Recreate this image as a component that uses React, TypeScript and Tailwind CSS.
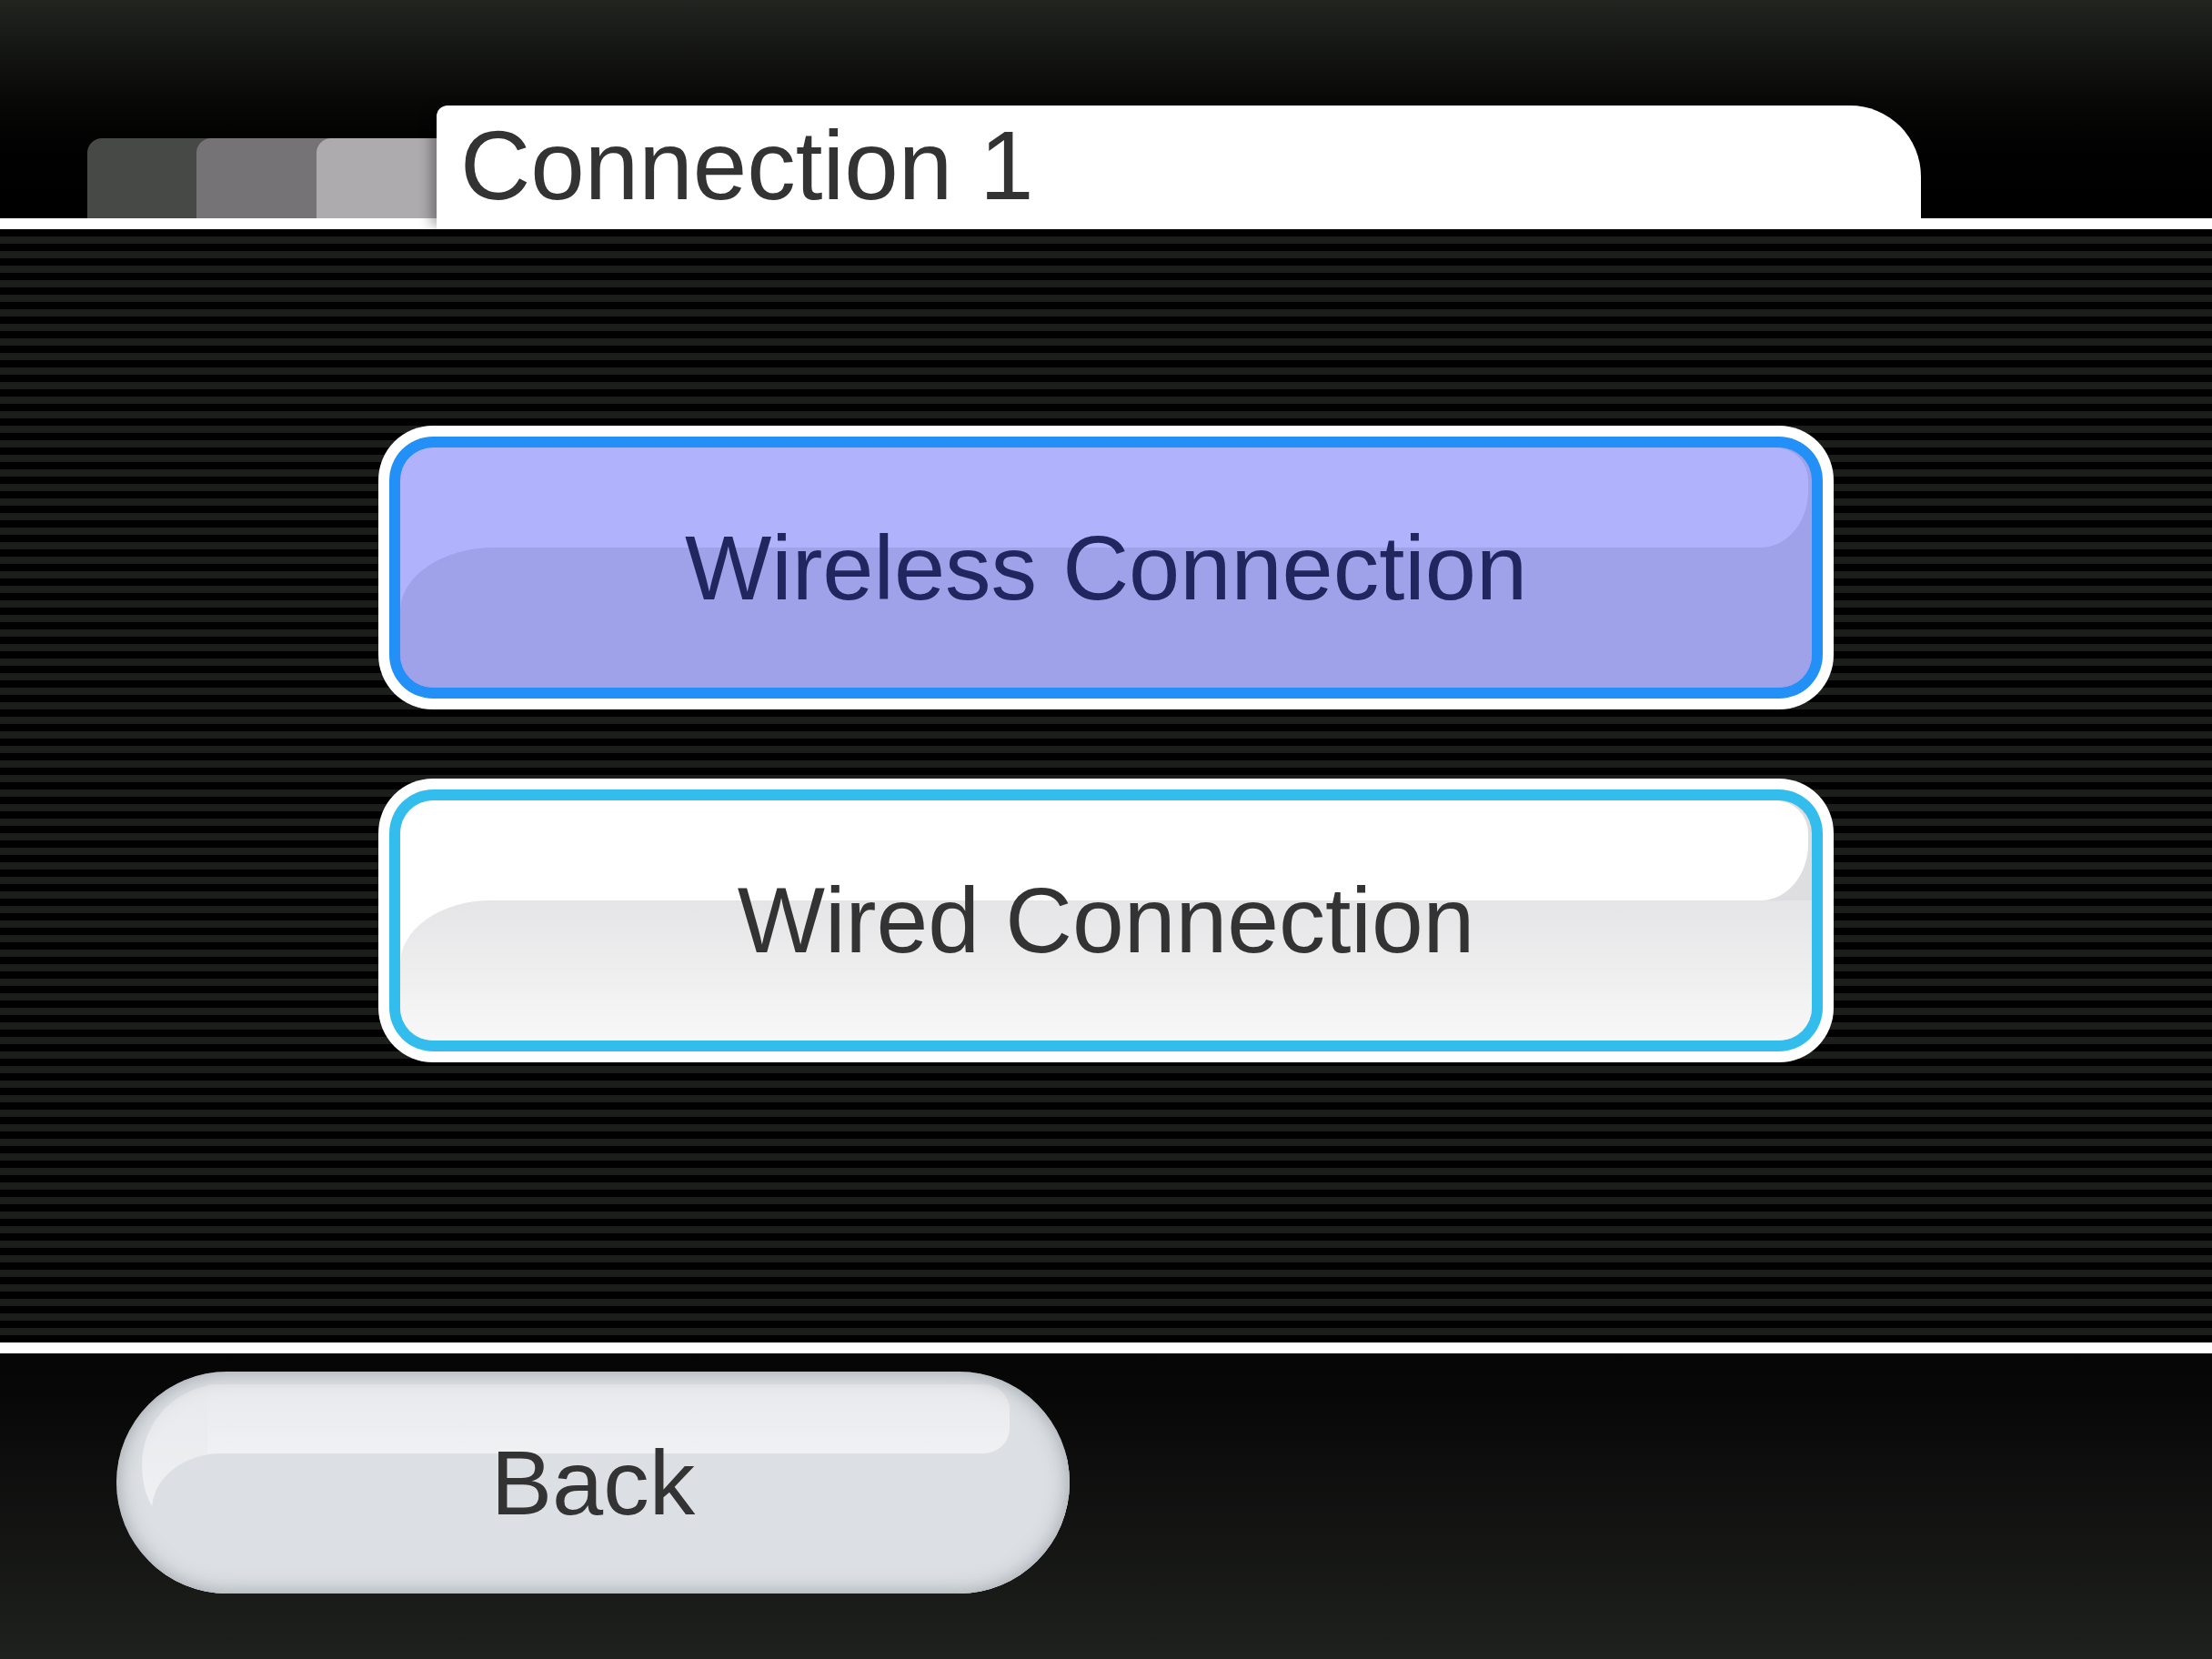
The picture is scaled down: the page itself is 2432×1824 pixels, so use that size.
export default function App() {
  return (
    <div className="flex h-[1824px] w-[2432px] flex-col overflow-hidden bg-black font-['Liberation_Sans',Arial,sans-serif]">
      {/* header with tabs */}
      <div className="relative z-10 flex h-[240px] shrink-0 items-end bg-gradient-to-b from-[#222420] to-[#000000] pl-[96px]">
        <div className="h-[88px] w-[140px] rounded-tl-[16px] bg-[#474946]" />
        <div className="ml-[-20px] h-[88px] w-[152px] rounded-tl-[16px] bg-[#757376]" />
        <div className="ml-[-20px] h-[88px] w-[152px] rounded-tl-[16px] bg-[#adabae]" />
        <div className="mb-[-12px] ml-[-20px] h-[136px] w-[1632px] rounded-tl-[12px] rounded-tr-[78px] bg-white pl-[26px] pt-[13px] shadow-[-10px_0_14px_-4px_rgba(0,0,0,0.35)]">
          <span className="text-[107px] leading-none text-[#333333]">Connection 1</span>
        </div>
      </div>
      <div className="h-[12px] shrink-0 bg-white" />

      {/* striped body */}
      <div className="flex flex-1 flex-col items-center gap-[76px] bg-[repeating-linear-gradient(to_bottom,#000000_0px,#000000_8px,#1b1e1b_8px,#1b1e1b_16px)] pt-[216px]">
        <div className="rounded-[60px] bg-white p-[12px]">
          <div className="rounded-[48px] bg-[#2290f6] p-[12px]">
            <div className="relative h-[264px] w-[1552px] overflow-hidden rounded-[36px] bg-[#9fa1e9]">
              <div className="absolute left-0 right-[4px] top-0 h-[110px] rounded-t-[36px] rounded-br-[52px_62px] bg-[#b0b2fc]" />
              <div className="absolute left-0 top-[100px] h-[90px] w-[110px] bg-[#b0b2fc]" />
              <div className="absolute inset-x-0 bottom-0 top-[110px] rounded-tl-[104px_70px] bg-[#9fa1e9]" />
              <div className="relative flex h-full items-center justify-center text-[101px] leading-none text-[#21265f]">
                Wireless Connection
              </div>
            </div>
          </div>
        </div>

        <div className="rounded-[60px] bg-white p-[12px]">
          <div className="rounded-[48px] bg-[#33bded] p-[12px]">
            <div className="relative h-[264px] w-[1552px] overflow-hidden rounded-[36px] bg-[#dedde0]">
              <div className="absolute left-0 right-[4px] top-0 h-[110px] rounded-t-[36px] rounded-br-[52px_62px] bg-white" />
              <div className="absolute left-0 top-[100px] h-[90px] w-[110px] bg-white" />
              <div className="absolute inset-x-0 bottom-0 top-[110px] rounded-tl-[100px_70px] bg-gradient-to-b from-[#e5e4e6] to-[#f8f8f8]" />
              <div className="relative flex h-full items-center justify-center text-[102px] leading-none text-[#333333]">
                Wired Connection
              </div>
            </div>
          </div>
        </div>
      </div>

      <div className="h-[12px] shrink-0 bg-white" />

      {/* footer */}
      <div className="flex h-[336px] shrink-0 flex-col bg-gradient-to-b from-[#050505] to-[#1f211e] pl-[128px] pt-[20px]">
        <div className="relative h-[244px] w-[1048px] overflow-hidden rounded-full bg-[#dce0e4]">
          <div className="absolute left-[28px] top-[14px] h-[146px] w-[880px] rounded-tl-[92px] rounded-bl-[30px_60px] bg-gradient-to-b from-[#e8e9ec] to-[#f0f1f3]" />
          <div className="absolute left-[100px] right-[66px] top-[14px] h-[76px] rounded-r-[28px] bg-gradient-to-b from-[#e8e9ec] to-[#f0f1f3]" />
          <div className="absolute bottom-0 left-[39px] right-0 top-[90px] rounded-tl-[76px_62px] bg-[#dce0e4]" />
          <div className="absolute inset-0 rounded-full shadow-[inset_0_0_22px_rgba(90,96,105,0.5)]" />
          <div className="relative flex h-full items-center justify-center text-[101px] leading-none text-[#333333]">
            Back
          </div>
        </div>
      </div>
    </div>
  );
}
